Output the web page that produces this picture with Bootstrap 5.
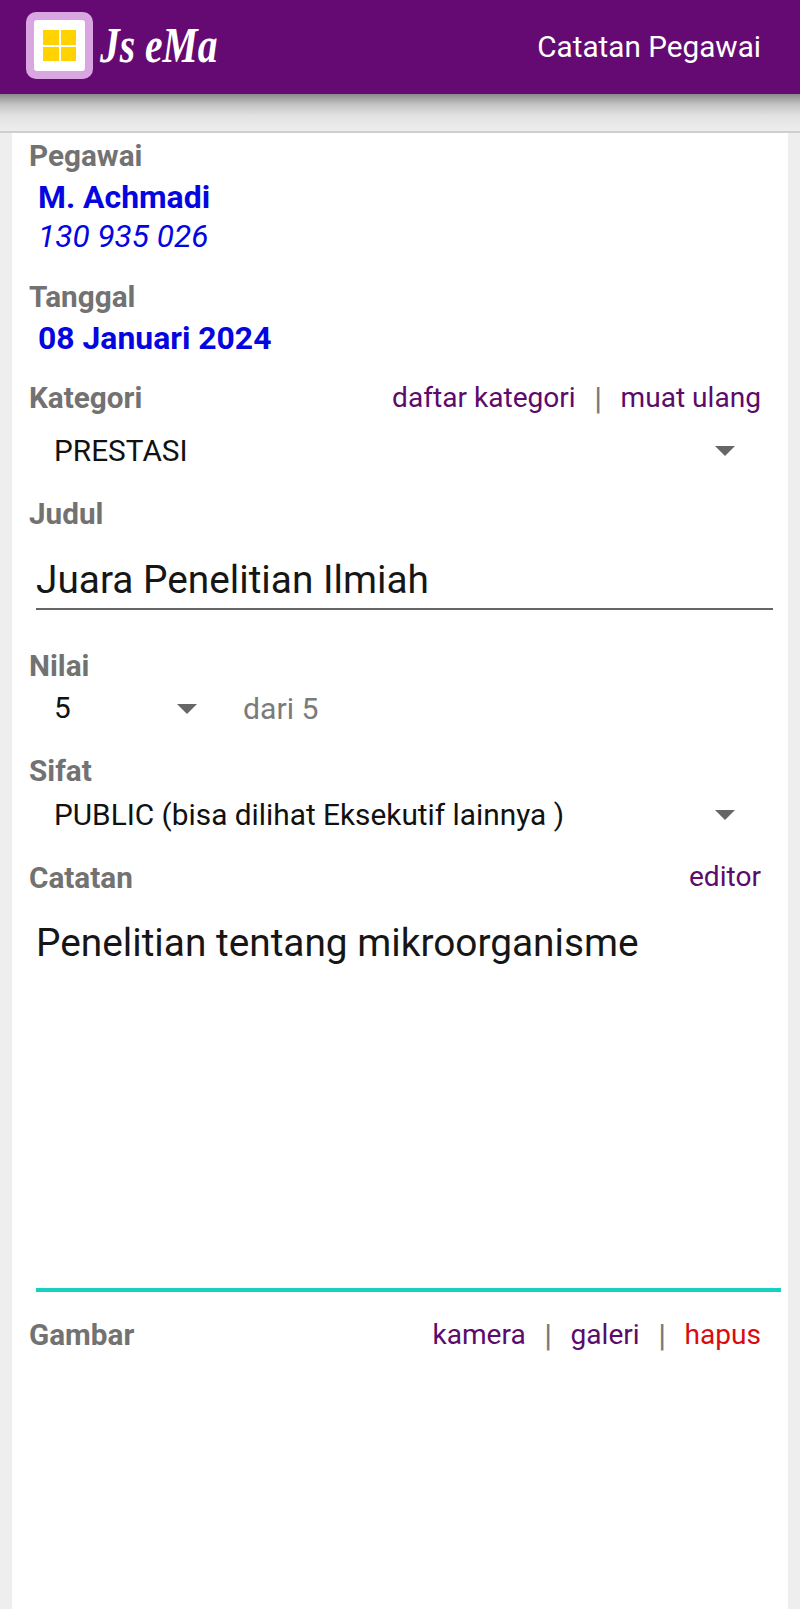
<!DOCTYPE html>
<html lang="id">
<head>
    <meta charset="UTF-8">
    <meta name="viewport" content="width=device-width, initial-scale=1.0">
    <title>Catatan Pegawai</title>
    <link href="https://cdn.jsdelivr.net/npm/bootstrap@5.3.0/dist/css/bootstrap.min.css" rel="stylesheet">
    <style>
        html, body { height: 100%; }
        body {
            background-color: #eeeeee;
            font-family: Roboto, "Liberation Sans", sans-serif;
            font-size: 29.8px;
            color: #111;
            overflow: hidden;
        }
        .top-bar {
            height: 94px;
            background-color: #660a73;
            padding: 0 39px 0 26px;
        }
        .app-logo {
            width: 67px;
            height: 67px;
            margin-top: -3px;
            background-color: #d9a6e2;
            border-radius: 10px;
            padding: 8px;
        }
        .app-logo-inner {
            height: 100%;
            background-color: #fff;
            border-radius: 3px;
            padding: 10px 9px;
        }
        .app-logo-grid {
            display: grid;
            grid-template-columns: 1fr 1fr;
            gap: 2px;
            height: 100%;
        }
        .app-logo-grid span { background-color: #ffd200; }
        .app-name {
            margin-left: 7px;
            margin-top: -5px;
            font-family: "Liberation Serif", serif;
            font-size: 50px;
            font-weight: bold;
            font-style: italic;
            color: #fff;
            line-height: 1;
            transform: scaleX(.79);
            transform-origin: left center;
        }
        .page-title { color: #fff; font-size: 29.7px; }
        .bar-shadow {
            height: 39px;
            background: linear-gradient(to bottom, #8a8a8a 0, #c6c6c6 11px, #e2e2e2 22px, #ededed 37px);
            border-bottom: 2px solid #cfcfcf;
        }
        .form-panel {
            margin: 0 12px;
            background-color: #fff;
            height: 1478px;
            padding: 0 27px 0 17px;
        }
        .field-label {
            color: #727272;
            font-weight: 700;
            font-size: 29.7px;
            line-height: 32px;
        }
        .field-value {
            color: #0505e0;
            padding-left: 9px;
            line-height: 39px;
            font-size: 31.6px;
        }
        .field-value.fw-bold { font-size: 31.9px; }
        .action-link { color: #5c0a6b; text-decoration: none; font-size: 28.1px; }
        .action-link.danger { color: #d90a10; }
        .sep { color: #7a7a7a; margin: 0 18.5px; font-size: 32px; line-height: 32px; }
        .pick-row {
            height: 42px;
            padding: 0 26px 0 8px;
            margin-left: 17px;
            color: #111;
        }
        .pick-arrow {
            width: 0;
            height: 0;
            border-left: 10px solid transparent;
            border-right: 10px solid transparent;
            border-top: 10px solid #666;
        }
        .pick-short { width: 151px; margin-left: 17px; padding: 0 0 0 8px; }
        .muted-text { color: #7a7a7a; margin-left: 46px; font-size: 30.2px; }
        .title-input, .note-input {
            display: block;
            background: transparent;
            border-radius: 0;
            border: 0;
            padding: 0;
            margin-left: 7px;
            color: #161616;
            box-shadow: none;
            font-family: inherit;
            font-size: 38.8px;
        }
        .title-input {
            width: 737px;
            height: 59px;
            border-bottom: 2px solid #666;
        }
        .note-input {
            width: 745px;
            height: 372px;
            resize: none;
            border-bottom: 4px solid #17d0bd;
            line-height: 46px;
            overflow: hidden;
        }
        .gap-pegawai { padding-top: 7px; }
    </style>
</head>
<body>

    <!-- Bar atas -->
    <header class="top-bar d-flex align-items-center justify-content-between">
        <div class="d-flex align-items-center">
            <div class="app-logo">
                <div class="app-logo-inner">
                    <div class="app-logo-grid"><span></span><span></span><span></span><span></span></div>
                </div>
            </div>
            <div class="app-name">Js eMa</div>
        </div>
        <div class="page-title">Catatan Pegawai</div>
    </header>
    <div class="bar-shadow"></div>

    <main class="form-panel">
        <form>
            <div class="gap-pegawai">
                <div class="field-label">Pegawai</div>
                <div class="field-value fw-bold" style="margin-top: 6px">M. Achmadi</div>
                <div class="field-value fst-italic">130 935 026</div>
            </div>

            <div style="margin-top: 25px">
                <div class="field-label">Tanggal</div>
                <div class="field-value fw-bold" style="margin-top: 6px">08 Januari 2024</div>
            </div>

            <div class="d-flex justify-content-between align-items-center" style="margin-top: 19px">
                <div class="field-label">Kategori</div>
                <div class="d-flex align-items-center">
                    <a href="#" class="action-link">daftar kategori</a>
                    <span class="sep">|</span>
                    <a href="#" class="action-link">muat ulang</a>
                </div>
            </div>
            <div class="pick-row d-flex align-items-center justify-content-between" style="margin-top: 11px">
                <span>PRESTASI</span>
                <span class="pick-arrow"></span>
            </div>

            <div class="field-label" style="margin-top: 26px">Judul</div>
            <input type="text" class="form-control title-input" value="Juara Penelitian Ilmiah" style="margin-top: 21px">

            <div class="field-label" style="margin-top: 40px">Nilai</div>
            <div class="d-flex align-items-center" style="margin-top: 4px">
                <div class="pick-row pick-short d-flex align-items-center justify-content-between">
                    <span>5</span>
                    <span class="pick-arrow"></span>
                </div>
                <span class="muted-text">dari 5</span>
            </div>

            <div class="field-label" style="margin-top: 24px">Sifat</div>
            <div class="pick-row d-flex align-items-center justify-content-between" style="margin-top: 7px">
                <span>PUBLIC (bisa dilihat Eksekutif lainnya )</span>
                <span class="pick-arrow"></span>
            </div>

            <div class="d-flex justify-content-between align-items-center" style="margin-top: 20px">
                <div class="field-label">Catatan</div>
                <a href="#" class="action-link">editor</a>
            </div>
            <textarea class="form-control note-input" style="margin-top: 21px">Penelitian tentang mikroorganisme</textarea>

            <div class="d-flex justify-content-between align-items-center" style="margin-top: 22px">
                <div class="field-label">Gambar</div>
                <div class="d-flex align-items-center">
                    <a href="#" class="action-link">kamera</a>
                    <span class="sep">|</span>
                    <a href="#" class="action-link">galeri</a>
                    <span class="sep">|</span>
                    <a href="#" class="action-link danger">hapus</a>
                </div>
            </div>
        </form>
    </main>

    <script src="https://cdn.jsdelivr.net/npm/bootstrap@5.3.0/dist/js/bootstrap.bundle.min.js"></script>
</body>
</html>
